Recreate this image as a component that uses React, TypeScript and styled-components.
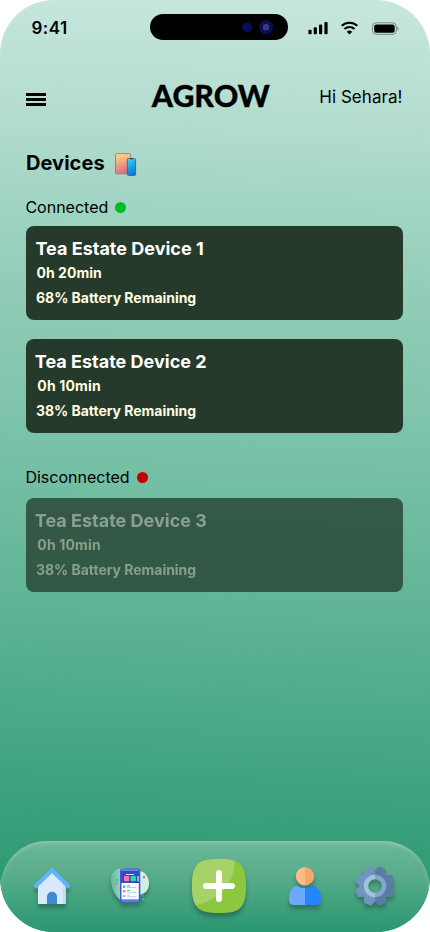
import React from "react";
import styled, { createGlobalStyle } from "styled-components";

const Global = createGlobalStyle`
  * { box-sizing: border-box; }
  body { margin: 0; background: #fff; }
`;

const Phone = styled.div`
  width: 430px;
  height: 932px;
  border-radius: 54px;
  overflow: hidden;
  display: flex;
  flex-direction: column;
  font-family: Inter, sans-serif;
  color: #000;
  background: linear-gradient(182deg, #c8e7dd 0%, #b0dbcd 15%, #a2d5c4 22%, #91ccb6 32%, #7bc2aa 47%, #5fb495 65%, #379f7a 88%, #29976f 100%);
`;

const StatusBar = styled.header`
  height: 54px;
  flex: none;
  display: grid;
  grid-template-columns: 150px 138px 1fr;
  padding-top: 14px;
`;

const Time = styled.div`
  padding: 4px 0 0 31.5px;
  font-size: 17px;
  line-height: 20px;
  font-weight: 600;
  letter-spacing: 0.45px;
`;

const Island = styled.div`
  height: 26px;
  border-radius: 13px;
  background: #000;
  svg { display: block; }
`;

const StatusIcons = styled.svg`
  display: block;
  width: 92px;
  height: 16px;
  margin: 6px 0 0 20px;
`;

const TitleBar = styled.div`
  height: 62px;
  flex: none;
  display: grid;
  grid-template-columns: 125px 1fr 125px;
  padding: 24px 27px 0 26px;
`;

const Menu = styled.div`
  display: flex;
  flex-direction: column;
  gap: 2px;
  padding-top: 15px;
  span { width: 20px; height: 3px; background: #000; }
`;

const Logo = styled.svg`
  width: 122px;
  height: 36px;
  overflow: visible;
  font-family: Lato, sans-serif;
  font-size: 30.5px;
  font-weight: 900;
`;

const Greeting = styled.div`
  padding: 8px 0.5px 0 0;
  font-size: 17px;
  line-height: 22px;
  letter-spacing: 0.05px;
  text-align: right;
  white-space: nowrap;
`;

const Content = styled.main`
  flex: 1;
  padding: 34px 27px 0 26px;
`;

const Heading = styled.h1`
  display: flex;
  align-items: center;
  gap: 8px;
  height: 26px;
  margin: 0;
  font-size: 20px;
  font-weight: 700;
  letter-spacing: 0.05px;
  svg { display: block; }
`;

const Label = styled.h2<{ $top: number; $bottom: number; $gap: number }>`
  display: flex;
  align-items: center;
  gap: ${(p) => p.$gap}px;
  height: 20px;
  margin: ${(p) => p.$top}px 0 ${(p) => p.$bottom}px -0.6px;
  font-size: 16px;
  font-weight: 400;
`;

const Dot = styled.i<{ $color: string }>`
  width: 11px;
  height: 11px;
  border-radius: 50%;
  background: ${(p) => p.$color};
`;

const Card = styled.article<{ $off?: boolean }>`
  height: 94px;
  border-radius: 8px;
  padding: 11px 10px;
  background: ${(p) => (p.$off ? "rgba(38,64,49,.8)" : "#253a2b")};
  & + & { margin-top: 19px; }
  > * { opacity: ${(p) => (p.$off ? 0.42 : 1)}; }
`;

const Name = styled.h3<{ $shift: number }>`
  margin: 0 0 0 ${(p) => p.$shift}px;
  color: #fff;
  font-size: 18px;
  line-height: 23px;
  font-weight: 700;
`;

const Detail = styled.p<{ $shift: number; $tracking: number }>`
  margin: 0 0 0 ${(p) => p.$shift}px;
  height: 25px;
  line-height: 25px;
  color: #fffde0;
  font-size: 14px;
  font-weight: 700;
  letter-spacing: ${(p) => p.$tracking}px;
`;

const Nav = styled.nav`
  flex: none;
  height: 91px;
  margin: 0 1px;
  padding-bottom: 1px;
  border-radius: 46px;
  display: grid;
  grid-template-columns: 102px 54px 124px 48px 92px;
  align-items: center;
  justify-items: center;
  background: linear-gradient(180deg, #6bb79a 0%, #58ac8b 38%, #2b9871 98%);
  box-shadow: inset 0 3px 4px -1px rgba(255, 255, 255, 0.25);
`;

const NavIcon = styled.svg`
  display: block;
  overflow: visible;
  filter: drop-shadow(0 4px 2px rgba(0, 0, 0, 0.27));
`;

const devices = [
  { name: "Tea Estate Device 1", time: "0h 20min", battery: "68%", nameShift: -0.5, timeShift: 0.5, tracking: 0.03 },
  { name: "Tea Estate Device 2", time: "0h 10min", battery: "38%", nameShift: -1.2, timeShift: 1.3, tracking: 0.17 },
  { name: "Tea Estate Device 3", time: "0h 10min", battery: "38%", nameShift: -1.2, timeShift: 1.3, tracking: 0.17 },
];

function DeviceCard({ device, off }: { device: (typeof devices)[number]; off?: boolean }) {
  return (
    <Card $off={off}>
      <Name $shift={device.nameShift}>{device.name}</Name>
      <Detail $shift={device.timeShift} $tracking={device.tracking}>{device.time}</Detail>
      <Detail $shift={0} $tracking={-0.035}>{device.battery} Battery Remaining</Detail>
    </Card>
  );
}

const toothAngles = [22.5, 67.5, 112.5, 157.5, 202.5, 247.5, 292.5, 337.5];

export default function App() {
  return (
    <>
      <Global />
      <Phone>
        <StatusBar>
          <Time>9:41</Time>
          <Island>
            <svg width="138" height="26">
              <circle cx="97" cy="13.5" r="5" fill="#0b0d58" />
              <circle cx="116" cy="13.3" r="7" fill="#0b0d58" />
              <circle cx="116" cy="13.3" r="3.2" fill="#3a3b79" />
            </svg>
          </Island>
          <StatusIcons viewBox="0 0 92 16">
            <rect x="0.4" y="9.7" width="3.2" height="4.5" rx="1" />
            <rect x="5.7" y="7.3" width="3.2" height="6.9" rx="1" />
            <rect x="11" y="4.6" width="3.2" height="9.6" rx="1" />
            <rect x="16.4" y="2" width="3.2" height="12.2" rx="1" />
            <path d="M33.7 6.6a11.5 11.5 0 0 1 15.6 0M36.5 9.8a7.3 7.3 0 0 1 10 0" fill="none" stroke="#000" strokeWidth="2.2" transform="translate(0 -.8)" />
            <path d="M38.7 11.7a4.2 4.2 0 0 1 5.6 0l-2.8 2.8z" />
            <rect x="64.5" y="2.8" width="23.8" height="11.6" rx="3.7" fill="none" stroke="#000" strokeOpacity=".38" />
            <rect x="66.2" y="4.4" width="20.5" height="8.4" rx="2.2" />
            <path d="M89.4 6.8v3.8c1.6-.6 1.6-3.2 0-3.8z" opacity=".4" />
          </StatusIcons>
        </StatusBar>
        <TitleBar>
          <Menu><span /><span /><span /></Menu>
          <Logo><text x="0.8" y="28.8" textLength="118" lengthAdjust="spacingAndGlyphs" stroke="#000" strokeWidth=".3">AGROW</text></Logo>
          <Greeting>Hi Sehara!</Greeting>
        </TitleBar>
        <Content>
          <Heading>
            Devices
            <svg width="24" height="26" viewBox="0 0 24 26">
              <defs>
                <linearGradient id="tablet" x2=".25" y2="1"><stop stopColor="#ffdf8f" /><stop offset=".55" stopColor="#f4a07f" /><stop offset="1" stopColor="#dc6f8b" /></linearGradient>
                <linearGradient id="mobile" x2=".3" y2="1"><stop stopColor="#59cef4" /><stop offset=".5" stopColor="#1eaaec" /><stop offset="1" stopColor="#147bd0" /></linearGradient>
              </defs>
              <rect x="2.5" y="3.6" width="15.2" height="20.2" rx="1" fill="url(#tablet)" stroke="#927969" strokeWidth=".8" />
              <rect x="14.3" y="8.5" width="8.3" height="17" rx="1.2" fill="url(#mobile)" stroke="#23688d" strokeWidth=".8" />
              <path d="M17 8.5h3l-.7 1h-1.6z" fill="#153449" />
            </svg>
          </Heading>
          <Label $top={21} $bottom={9} $gap={6.6}>Connected <Dot $color="#00bd26" /></Label>
          <DeviceCard device={devices[0]} />
          <DeviceCard device={devices[1]} />
          <Label $top={34} $bottom={11} $gap={7.6}>Disconnected <Dot $color="#c00000" /></Label>
          <DeviceCard device={devices[2]} off />
        </Content>
        <Nav>
          <NavIcon width="38" height="38" viewBox="0 0 38 38">
            <path d="M5 17 19 4l14 13v20H5z" fill="#d9eafc" />
            <path d="m19 5 11 10v22h3V17z" fill="#c3daf5" />
            <path d="M14 37V29.8a5 5 0 0 1 10 0V37z" fill="#4088d5" />
            <path d="m1.5 20.2 17.5-17 17.5 17" fill="none" stroke="#60b4ff" strokeWidth="4" />
          </NavIcon>
          <NavIcon width="40" height="38" viewBox="0 0 40 38">
            <defs><linearGradient id="leaf"><stop stopColor="#69b999" /><stop offset=".35" stopColor="#a7dac5" /><stop offset=".8" stopColor="#cdf0e2" /></linearGradient></defs>
            <path d="M13 1.5C4 .5 0 7 1 15s6 18 14 20c7 1 7-3 9-4l5-3c7-1 10-6 10-12 0-7-5-13-12-12-4 1-8-2-14-2.5z" fill="url(#leaf)" />
            <rect x="10" y="1.5" width="20.3" height="34" rx="2.5" fill="#3d5cd3" />
            <rect x="11.5" y="4" width="17.3" height="29" rx="1" fill="#344bb8" />
            <path d="M11.5 3.2h17.3" stroke="#6689f5" strokeWidth="1.6" />
            <path d="M16 7.5h8" stroke="#d9e3ff" />
            <path d="M11.5 16h17.3v16.5H11.5z" fill="#fff" />
            <path d="M11.5 34h17.3" stroke="#7896ff" />
            <rect x="14" y="9" width="5.2" height="5.2" rx="1" fill="#ff70b4" />
            <rect x="20.7" y="9" width="5.2" height="5.2" rx="1" fill="#20dfac" />
            <path d="M27.2 9h1.7v5.2h-1.7z" fill="#a5baff" />
            <path d="M13 19.7h2.3" stroke="#18c898" strokeWidth="2.3" />
            <path d="M13 24.3h2.3M5.3 16.5h2" stroke="#f55daf" strokeWidth="2" />
            <path d="M13 29h2.3" stroke="#9aacff" strokeWidth="2" />
            <path d="M17 18.8h3M17 23.4h3" stroke="#18c898" />
            <path d="M17 20.5h9.5M17 25.3h9.5M17 28h3M17 29.8h9.5" stroke="#bac8f4" />
            <path d="M33 10.3h2" stroke="#d85da6" strokeWidth="2" />
            <path d="M31 28.5h2.5" stroke="#5680d7" strokeWidth="2" />
            <path d="M6 13h2M32.3 32.3h2" stroke="#15d39a" strokeWidth="2" />
          </NavIcon>
          <NavIcon width="54" height="54" viewBox="0 0 54 54">
            <defs><clipPath id="tile"><path d="M27 0C38 0 45 1.2 49 6s5 12 5 21-1 16-5 21-11 6-22 6-18-1.2-22-6-5-12-5-21S1 11 5 6 16 0 27 0z" /></clipPath></defs>
            <g clipPath="url(#tile)"><path d="M0 0h54v54H0z" fill="#8dc63f" /><path d="M0 0h42.3C44 24 26 44 0 46.5z" fill="#a6d268" /></g>
            <path d="M27 14v26M14 27h26" stroke="#fff" strokeWidth="6" strokeLinecap="round" />
          </NavIcon>
          <NavIcon width="32" height="38" viewBox="0 0 32 38">
            <path d="M16 18.5H10C4 18.5 0 23 0 33c0 3 1.8 5 5 5h11z" fill="#6ba8ff" />
            <path d="M16 18.5h6c6 0 10 4.5 10 14.5 0 3-1.8 5-5 5H16z" fill="#2684ff" />
            <path d="M7.6 18.2c3.6 3.8 13.2 3.8 16.8 0z" fill="#378667" />
            <path d="M16 0a9.2 9.2 0 0 0 0 18.4z" fill="#ffbb85" />
            <path d="M16 0a9.2 9.2 0 0 1 0 18.4z" fill="#f2a56d" />
          </NavIcon>
          <NavIcon width="38" height="38" viewBox="-19 -19 38 38">
            <defs>
              <clipPath id="left"><path d="M-20-20H0v40h-20z" /></clipPath>
              <clipPath id="right"><path d="M0-20h20v40H0z" /></clipPath>
              <g id="gear">
                <circle r="12" fill="none" strokeWidth="7.4" />
                {toothAngles.map((a) => <path key={a} d="M-5.8-14-4.1-19.1q.2-.7.9-.7h6.4q.7 0 .9.7L5.8-14z" transform={`rotate(${a})`} stroke="none" />)}
              </g>
            </defs>
            <g clipPath="url(#left)"><use href="#gear" fill="#7095be" stroke="#7095be" /><circle r="9" fill="none" stroke="#9fc3de" strokeWidth="4.4" /></g>
            <g clipPath="url(#right)"><use href="#gear" fill="#5c7ca6" stroke="#5c7ca6" /><circle r="9" fill="none" stroke="#7ea8cc" strokeWidth="4.4" /></g>
          </NavIcon>
        </Nav>
      </Phone>
    </>
  );
}
